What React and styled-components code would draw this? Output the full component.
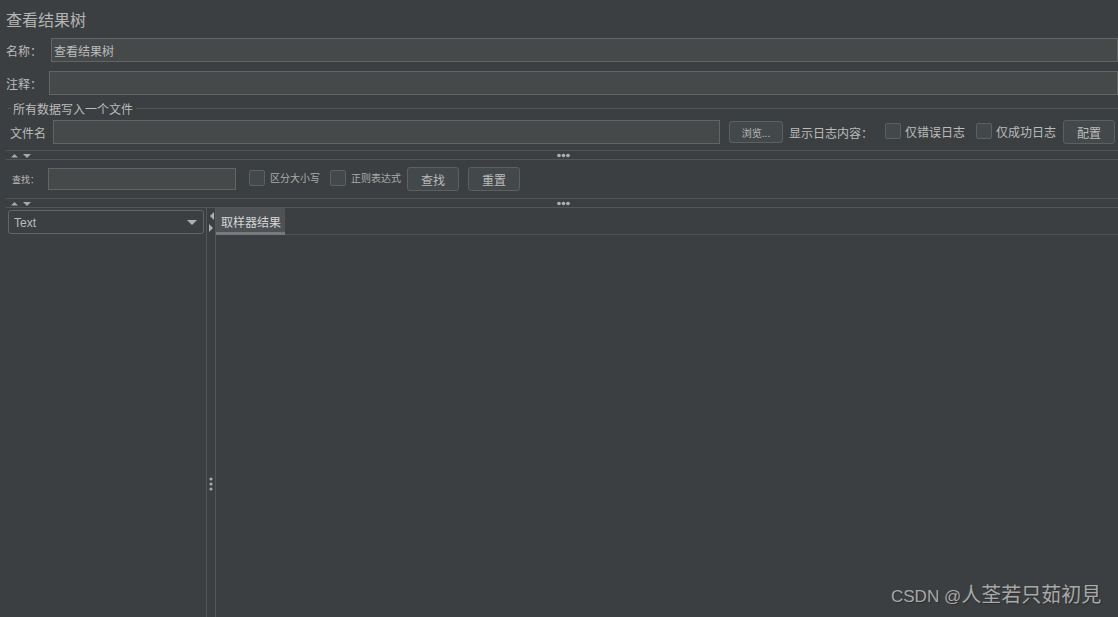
import React from "react";
import styled, { createGlobalStyle } from "styled-components";

const GlobalStyle = createGlobalStyle`
  html, body {
    margin: 0;
    padding: 0;
    background: #3c3f41;
  }
  * {
    box-sizing: border-box;
  }
`;

const Page = styled.div`
  position: relative;
  width: 1118px;
  height: 617px;
  overflow: hidden;
  display: flex;
  flex-direction: column;
  background: #3c3f41;
  color: #bbbbbb;
  font-family: "Noto Sans CJK SC", "Liberation Sans", sans-serif;
  font-size: 12px;
`;

const Title = styled.div`
  height: 38px;
  padding-left: 6px;
  font-size: 16px;
  line-height: 38px;
  color: #b4b4b4;
`;

const FormRow = styled.div`
  display: flex;
  align-items: center;
  height: 24px;
  margin-top: ${(p) => p.$top || 0}px;
  padding-left: ${(p) => p.$left ?? 6}px;
  flex-shrink: 0;
`;

const Label = styled.label`
  width: ${(p) => p.$width}px;
  flex-shrink: 0;
  white-space: nowrap;
  font-size: ${(p) => p.$size || 12}px;
  color: #bbbbbb;
`;

const Input = styled.div`
  height: ${(p) => p.$height || 24}px;
  width: ${(p) => (p.$width ? `${p.$width}px` : "auto")};
  flex: ${(p) => (p.$width ? "none" : 1)};
  margin-right: ${(p) => p.$right ?? 0}px;
  border: 1px solid #646464;
  background: #45494a;
  padding-left: 2px;
  line-height: 23px;
  font-size: 12px;
  color: #bbbbbb;
`;

const Legend = styled.div`
  display: flex;
  align-items: center;
  height: 14px;
  margin-top: 6px;
  padding-left: 8px;
  font-size: 12px;
  color: #bbbbbb;
  flex-shrink: 0;

  &::before {
    content: "";
    width: 3px;
    height: 1px;
    margin-right: 2px;
    background: #555555;
  }
  &::after {
    content: "";
    flex: 1;
    height: 1px;
    margin-left: 3px;
    background: #555555;
  }
`;

const Button = styled.button`
  width: ${(p) => p.$width || 52}px;
  height: ${(p) => p.$height || 24}px;
  margin: ${(p) => p.$margin || 0};
  padding: 2px 0 0;
  flex-shrink: 0;
  border: 1px solid #5e6060;
  border-radius: 3px;
  background: #43484a;
  color: #bbbbbb;
  font-family: inherit;
  font-size: ${(p) => p.$size || 12}px;
  line-height: 1;
`;

const CheckLabel = styled.label`
  display: flex;
  align-items: center;
  flex-shrink: 0;
  width: ${(p) => p.$width}px;
  padding-bottom: ${(p) => (p.$size ? 2 : 0)}px;
  white-space: nowrap;
  font-size: ${(p) => p.$size || 12}px;
  line-height: 16px;
  color: ${(p) => (p.$size ? "#a9adad" : "#bbbbbb")};

  &::before {
    content: "";
    width: 14px;
    height: 14px;
    flex-shrink: 0;
    margin-top: ${(p) => (p.$size ? 0 : -2)}px;
    margin-right: ${(p) => (p.$size ? 5 : 4)}px;
    border: 1px solid #5e6060;
    border-radius: 2px;
    background: #43494a;
  }
`;

const Splitter = styled.div`
  position: relative;
  height: 10px;
  margin: ${(p) => p.$margin || 0};
  margin-left: 6px;
  flex-shrink: 0;
  border-top: 1px solid #555555;
  border-bottom: 1px solid #555555;
`;

const Arrows = styled.svg`
  position: absolute;
  left: 5px;
  top: 2px;
`;

const Dots = styled.svg`
  position: absolute;
  left: 551px;
  top: 2px;
`;

const SearchRow = styled.div`
  display: flex;
  align-items: center;
  height: 38px;
  padding-left: 12px;
  flex-shrink: 0;
`;

const Workspace = styled.div`
  flex: 1;
  display: flex;
  min-height: 0;
`;

const LeftPane = styled.div`
  width: 206px;
  padding: 2px 0 0 8px;
  flex-shrink: 0;
`;

const Select = styled.div`
  display: flex;
  align-items: center;
  justify-content: space-between;
  width: 196px;
  height: 24px;
  padding: 1px 6px 0 5px;
  border: 1px solid #646464;
  border-radius: 3px;
  font-family: "Liberation Sans", sans-serif;
  font-size: 12px;
  color: #bbbbbb;
`;

const Divider = styled.div`
  position: relative;
  width: 10px;
  flex-shrink: 0;
  border-left: 1px solid #555555;
  border-right: 1px solid #555555;
`;

const CollapseArrows = styled.svg`
  position: absolute;
  left: 2px;
  top: 4px;
`;

const Grip = styled.svg`
  position: absolute;
  left: 2px;
  top: 269px;
`;

const RightPane = styled.div`
  flex: 1;
  min-width: 0;
`;

const TabBar = styled.div`
  display: flex;
  height: 27px;
  border-bottom: 1px solid #4e5254;
`;

const Tab = styled.div`
  width: 69px;
  height: 27px;
  padding-left: 5px;
  background: #4e5254;
  border-bottom: 3px solid #747a80;
  line-height: 27px;
  font-size: 12px;
  color: #d4d4d4;
`;

const Watermark = styled.div`
  position: absolute;
  left: 891px;
  top: 581px;
  font-family: "Liberation Sans", "Noto Sans CJK SC", sans-serif;
  font-size: 17px;
  line-height: 28px;
  white-space: nowrap;
  color: #a8a8a8;
  text-shadow: 1px 1px 1px #2c2e30;

  span {
    font-size: 20px;
  }
`;

function SplitBar({ margin }) {
  return (
    <Splitter $margin={margin}>
      <Arrows width="20" height="5" viewBox="0 0 20 5">
        <path d="M0 4.5L3.5 1L7 4.5Z M12 1H20L16 5Z" fill="#a8a8a8" />
      </Arrows>
      <Dots width="14" height="5" viewBox="0 0 14 5">
        <g fill="#b0b0b0">
          <circle cx="2" cy="2.5" r="1.8" />
          <circle cx="6.5" cy="2.5" r="1.8" />
          <circle cx="11" cy="2.5" r="1.8" />
        </g>
      </Dots>
    </Splitter>
  );
}

export default function App() {
  return (
    <Page>
      <GlobalStyle />
      <Title>查看结果树</Title>
      <FormRow>
        <Label $width={45}>名称：</Label>
        <Input>查看结果树</Input>
      </FormRow>
      <FormRow $top={9}>
        <Label $width={43}>注释：</Label>
        <Input />
      </FormRow>
      <Legend>所有数据写入一个文件</Legend>
      <FormRow $top={5} $left={10}>
        <Label $width={43}>文件名</Label>
        <Input $width={667} $right={9} />
        <Button $width={54} $height={22} $size={10} $margin="0 6px 0 0">
          浏览...
        </Button>
        <Label $width={96}>显示日志内容：</Label>
        <CheckLabel $width={91}>仅错误日志</CheckLabel>
        <CheckLabel $width={87}>仅成功日志</CheckLabel>
        <Button>配置</Button>
      </FormRow>
      <SplitBar margin="6px 0 0" />
      <SearchRow>
        <Label $width={36} $size={9}>
          查找：
        </Label>
        <Input $width={188} $height={22} $right={13} />
        <CheckLabel $width={81} $size={10}>
          区分大小写
        </CheckLabel>
        <CheckLabel $width={77} $size={10}>
          正则表达式
        </CheckLabel>
        <Button $margin="0 9px 0 0">查找</Button>
        <Button>重置</Button>
      </SearchRow>
      <SplitBar />
      <Workspace>
        <LeftPane>
          <Select>
            Text
            <svg width="10" height="5" viewBox="0 0 10 5">
              <path d="M0 0H10L5 5Z" fill="#b0b0b0" />
            </svg>
          </Select>
        </LeftPane>
        <Divider>
          <CollapseArrows width="5" height="20" viewBox="0 0 5 20">
            <path d="M5 0V8L1 4Z M0 12L4 16L0 20Z" fill="#b0b0b0" />
          </CollapseArrows>
          <Grip width="4" height="14" viewBox="0 0 4 14">
            <g fill="#a8a8a8">
              <circle cx="2" cy="2" r="1.6" />
              <circle cx="2" cy="7" r="1.6" />
              <circle cx="2" cy="12" r="1.6" />
            </g>
          </Grip>
        </Divider>
        <RightPane>
          <TabBar>
            <Tab>取样器结果</Tab>
          </TabBar>
        </RightPane>
      </Workspace>
      <Watermark>
        CSDN @<span>人荃若只茹初見</span>
      </Watermark>
    </Page>
  );
}
